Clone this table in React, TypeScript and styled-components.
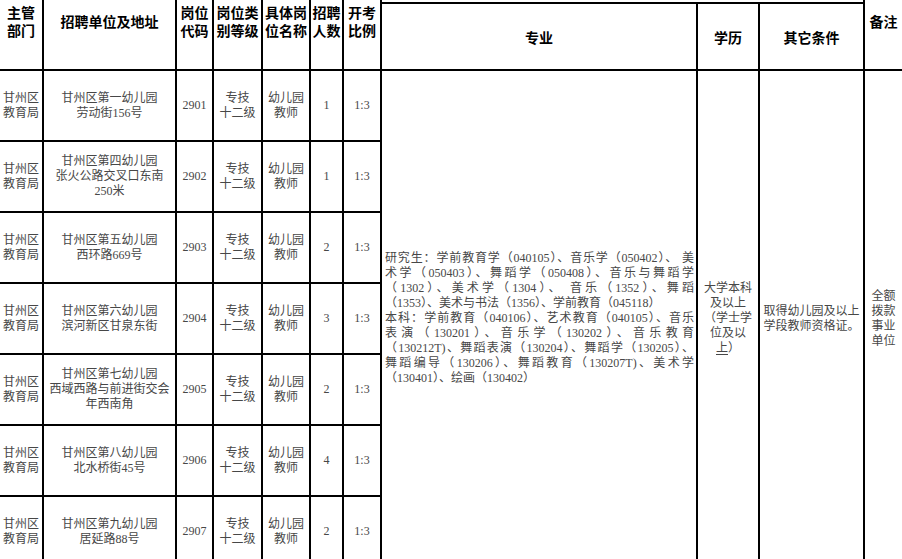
import React from "react";
import styled, { createGlobalStyle } from "styled-components";

const GlobalStyle = createGlobalStyle`
  html, body {
    margin: 0;
    padding: 0;
    background: #fff;
    overflow: hidden;
  }
`;

const Viewport = styled.div`
  width: 902px;
  height: 559px;
  overflow: hidden;
  background: #fff;
`;

const Sheet = styled.table`
  margin: -29px 0 0 -2px;
  border-collapse: collapse;
  table-layout: fixed;
  width: 904px;
  font-family: "Liberation Serif", "Noto Sans CJK SC", serif;
  font-size: 12px;
  line-height: 15px;
  color: #474747;
`;

const Row = styled.tr<{ $h: number }>`
  height: ${(p) => p.$h}px;
`;

const HeadCell = styled.th`
  border: 2px solid #000;
  padding: 0;
  font-family: "Noto Sans CJK SC", sans-serif;
  font-size: 14px;
  line-height: 18px;
  font-weight: 700;
  color: #000;
  text-align: center;
  vertical-align: middle;
`;

const HeadLine = styled.span`
  display: block;
  height: 18px;
  white-space: nowrap;
`;

const Cell = styled.td<{ $align?: "left" | "center" }>`
  border: 2px solid #000;
  padding: 0 2px;
  text-align: ${(p) => p.$align ?? "center"};
  vertical-align: middle;
  white-space: nowrap;
`;

const MajorCell = styled(Cell)`
  padding: 0 2px 0 3px;
`;

const Line = styled.span<{ $justify?: boolean }>`
  display: block;
  height: 15px;
  white-space: nowrap;
  text-align: ${(p) => (p.$justify ? "justify" : "inherit")};
  text-align-last: ${(p) => (p.$justify ? "justify" : "auto")};
`;

const Marked = styled.span`
  text-decoration: underline;
  text-underline-offset: 2px;
`;

const widths = [44, 133, 37, 49, 48, 33, 38, 316, 62, 105, 39];

type Post = {
  unit: string[];
  code: string;
  count: string;
};

const posts: Post[] = [
  { unit: ["甘州区第一幼儿园", "劳动街156号"], code: "2901", count: "1" },
  { unit: ["甘州区第四幼儿园", "张火公路交叉口东南", "250米"], code: "2902", count: "1" },
  { unit: ["甘州区第五幼儿园", "西环路669号"], code: "2903", count: "2" },
  { unit: ["甘州区第六幼儿园", "滨河新区甘泉东街"], code: "2904", count: "3" },
  { unit: ["甘州区第七幼儿园", "西域西路与前进街交会", "年西南角"], code: "2905", count: "2" },
  { unit: ["甘州区第八幼儿园", "北水桥街45号"], code: "2906", count: "4" },
  { unit: ["甘州区第九幼儿园", "居延路88号"], code: "2907", count: "2" },
];

const majorLines: [string, boolean][] = [
  ["研究生：学前教育学（040105）、音乐学（050402）、 美", true],
  ["术学（050403）、舞蹈学（050408）、音乐与舞蹈学", true],
  ["（1302）、美术学（1304）、 音乐（1352）、舞蹈", true],
  ["（1353）、美术与书法（1356）、学前教育（045118）", false],
  ["本科：学前教育（040106）、艺术教育（040105）、音乐", true],
  ["表演（130201）、音乐学（130202）、音乐教育", true],
  ["（130212T)、舞蹈表演（130204）、舞蹈学（130205）、", true],
  ["舞蹈编导（130206）、舞蹈教育（130207T)、美术学", true],
  ["（130401）、绘画（130402）", false],
];

const Lines: React.FC<{ items: React.ReactNode[] }> = ({ items }) => (
  <>
    {items.map((t, i) => (
      <Line key={i}>{t}</Line>
    ))}
  </>
);

const Head: React.FC<{ items: string[] }> = ({ items }) => (
  <>
    {items.map((t, i) => (
      <HeadLine key={i}>{t}</HeadLine>
    ))}
  </>
);

const App: React.FC = () => {
  return (
    <Viewport>
      <GlobalStyle />
      <Sheet>
        <colgroup>
          {widths.map((w, i) => (
            <col key={i} style={{ width: w }} />
          ))}
        </colgroup>
        <thead>
          <Row $h={31}>
            <HeadCell rowSpan={2}><Head items={["主管", "部门"]} /></HeadCell>
            <HeadCell rowSpan={2}><Head items={["招聘单位及地址"]} /></HeadCell>
            <HeadCell rowSpan={2}><Head items={["岗位", "代码"]} /></HeadCell>
            <HeadCell rowSpan={2}><Head items={["岗位类", "别等级"]} /></HeadCell>
            <HeadCell rowSpan={2}><Head items={["具体岗", "位名称"]} /></HeadCell>
            <HeadCell rowSpan={2}><Head items={["招聘", "人数"]} /></HeadCell>
            <HeadCell rowSpan={2}><Head items={["开考", "比例"]} /></HeadCell>
            <HeadCell colSpan={3} />
            <HeadCell rowSpan={2}><Head items={["备注"]} /></HeadCell>
          </Row>
          <Row $h={67}>
            <HeadCell><Head items={["专业"]} /></HeadCell>
            <HeadCell><Head items={["学历"]} /></HeadCell>
            <HeadCell><Head items={["其它条件"]} /></HeadCell>
          </Row>
        </thead>
        <tbody>
          {posts.map((p, i) => (
            <Row $h={71} key={p.code}>
              <Cell>
                <Lines items={["甘州区", "教育局"]} />
              </Cell>
              <Cell>
                <Lines items={p.unit} />
              </Cell>
              <Cell>{p.code}</Cell>
              <Cell>
                <Lines items={["专技", "十二级"]} />
              </Cell>
              <Cell>
                <Lines items={["幼儿园", "教师"]} />
              </Cell>
              <Cell>{p.count}</Cell>
              <Cell>1:3</Cell>
              {i === 0 && (
                <>
                  <MajorCell rowSpan={posts.length} $align="left">
                    {majorLines.map(([t, j], k) => (
                      <Line key={k} $justify={j}>
                        {t}
                      </Line>
                    ))}
                  </MajorCell>
                  <Cell rowSpan={posts.length}>
                    <Lines
                      items={[
                        "大学本科",
                        "及以上",
                        "（学士学",
                        "位及以",
                        <>
                          <Marked>上</Marked>）
                        </>,
                      ]}
                    />
                  </Cell>
                  <Cell rowSpan={posts.length}>
                    <Lines items={["取得幼儿园及以上", "学段教师资格证。"]} />
                  </Cell>
                  <Cell rowSpan={posts.length}>
                    <Lines items={["全额", "拨款", "事业", "单位"]} />
                  </Cell>
                </>
              )}
            </Row>
          ))}
        </tbody>
      </Sheet>
    </Viewport>
  );
};

export default App;
